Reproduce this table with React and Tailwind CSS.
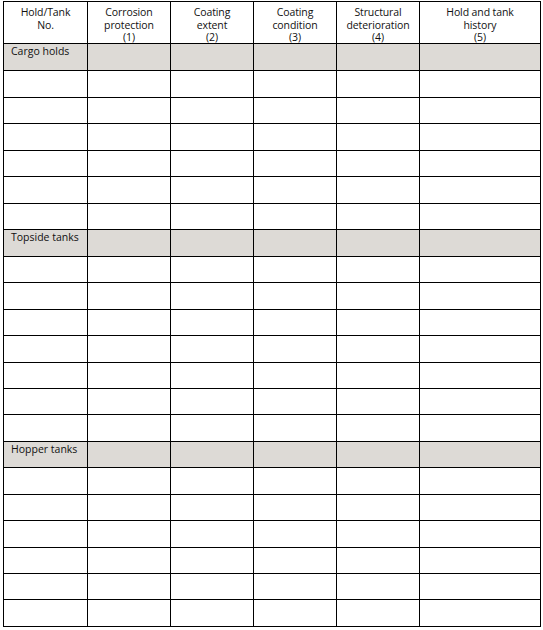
import React from "react";

const headers = [
  ["Hold/Tank", "No."],
  ["Corrosion", "protection", "(1)"],
  ["Coating", "extent", "(2)"],
  ["Coating", "condition", "(3)"],
  ["Structural", "deterioration", "(4)"],
  ["Hold and tank", "history", "(5)"],
];

const rows = [
  { label: "Cargo holds" },
  ...Array(6).fill({}),
  { label: "Topside tanks" },
  ...Array(7).fill({}),
  { label: "Hopper tanks" },
  ...Array(6).fill({}),
];

const diffs = [27, 27, 26, 27, 26, 27, 26, 27, 26, 27, 26, 27, 26, 26, 27, 26, 27, 26, 27, 26, 26, 27];

export default function App() {
  return (
    <div className="w-[543px] h-[630px] bg-white pl-[3px] pt-[1px] text-[#111]" style={{ fontFamily: '"Open Sans", "Noto Sans", sans-serif' }}>
      <div className="grid grid-cols-[83px_82px_82px_82px_82px_120px] gap-px bg-black p-px w-[538px]">
        {headers.map((lines, i) => (
          <div key={i} className="bg-white h-[41px] flex flex-col items-center pt-[4px] text-[10.5px] leading-[12.5px] font-medium tracking-[-0.1px]">
            {lines.map((l, j) => (
              <span key={j}>{l}</span>
            ))}
          </div>
        ))}
        {rows.map((r, ri) =>
          headers.map((_, ci) => (
            <div
              key={ri + "-" + ci}
              className={(r.label ? "bg-[#dddad6]" : "bg-white") + " text-[10.5px] leading-[12px] font-medium pl-[7px] pt-[1px]"}
              style={{ height: diffs[ri] - 1 }}
            >
              {ci === 0 && r.label ? r.label : null}
            </div>
          ))
        )}
      </div>
    </div>
  );
}
